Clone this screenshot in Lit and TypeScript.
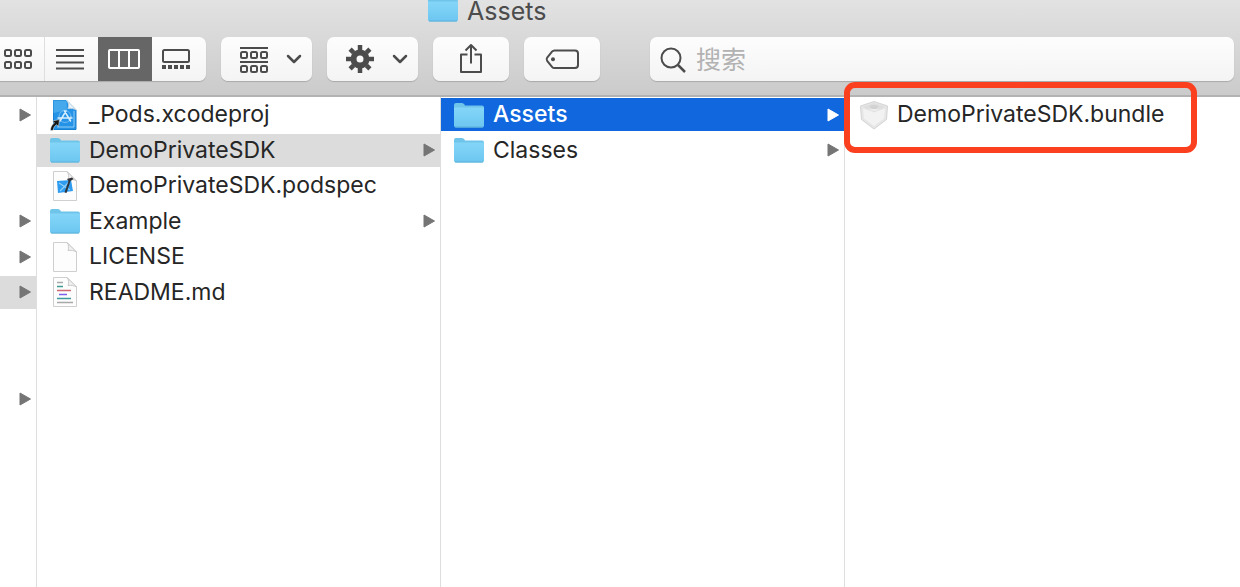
import { LitElement, html, svg, css, nothing } from "lit";
import { customElement, property, state } from "lit/decorators.js";
import { classMap } from "lit/directives/class-map.js";

type Kind = "folder" | "xcodeproj" | "podspec" | "blank" | "markdown" | "bundle";

interface Entry {
  name: string;
  kind: Kind;
  expandable?: boolean;
}

const SIDE: boolean[] = [true, false, false, true, true, true, false, false, true];

const PROJECT: Entry[] = [
  { name: "_Pods.xcodeproj", kind: "xcodeproj" },
  { name: "DemoPrivateSDK", kind: "folder", expandable: true },
  { name: "DemoPrivateSDK.podspec", kind: "podspec" },
  { name: "Example", kind: "folder", expandable: true },
  { name: "LICENSE", kind: "blank" },
  { name: "README.md", kind: "markdown" },
];

const SDK: Entry[] = [
  { name: "Assets", kind: "folder", expandable: true },
  { name: "Classes", kind: "folder", expandable: true },
];

const ASSETS: Entry[] = [{ name: "DemoPrivateSDK.bundle", kind: "bundle" }];

const page = svg`
  <path d="M4.500 1.500H18L27.500 11V30.500H4.500Z" fill="#fdfdfd" stroke="#cfcfcf"/>
  <path d="M18 1.500C20 4 20 7 19 9.500C22 9 25 9.500 27.500 11Z" fill="#f1f1f1" stroke="#c9c9c9"/>`;

const glyphs: Record<Kind, unknown> = {
  folder: svg`
    <defs>
      <linearGradient id="f" x1="0" y1="0" x2="0" y2="1">
        <stop offset="0" stop-color="#84d6f8"/><stop offset="1" stop-color="#6cc6f0"/>
      </linearGradient>
    </defs>
    <path d="M1 27V6Q1 4 3 4H9Q10.500 4 11.500 5.500L12 6.500H29Q31 6.500 31 8.500V27Z" fill="#6fc4ea"/>
    <path d="M1 8.500H31V26.500Q31 28.500 29 28.500H3Q1 28.500 1 26.500Z" fill="url(#f)"/>
    <path d="M2 28H30" stroke="#5fb1d8" fill="none"/>`,
  xcodeproj: svg`
    <path d="M4.500 1.500H17.500L27 11V30.500H4.500Z" fill="#2492e6" stroke="#1b7fd0"/>
    <path d="M4.500 1.500H17.500L18 11L4.500 14Z" fill="#45a9ec"/>
    <path d="M17.500 1C20 4 20 7 19 9.500C22 9 25 9.500 27.500 11Z" fill="#e9f2f8" stroke="#c3d6e3"/>
    <path d="M8 28H25V12" stroke="#8ecdf7" fill="none"/>
    <g stroke="#d9efff" stroke-width="1.500" fill="none" stroke-linecap="round">
      <path d="M17 12L11 22M15.500 12L21.500 22M9 19H23"/>
      <circle cx="16" cy="17.500" r="6" stroke-width=".6" opacity=".7"/>
    </g>
    <path d="M1.500 31.500C1.500 28 3 25.500 5.500 24L3.500 22L10.500 20.500L9.500 27.500L7.500 25.700C5.500 27 4.500 28.500 4 31.500Z" fill="#161616" stroke="#fff" stroke-width=".5"/>`,
  podspec: svg`${page}
    <path d="M8 11L22 10L24 21L9 23Z" fill="#2d9bf0"/>
    <path d="M10 13L21 20M20 12L11 21" stroke="#8fd0fb" stroke-width="1.300"/>
    <path d="M18 9L23 7.500L24.500 9L21.500 11L17.500 23L15.500 22.500L19.500 11Z" fill="#30343a"/>`,
  blank: page,
  markdown: svg`${page}
    <g stroke-width="1.500" fill="none">
      <path d="M8 6.500H14" stroke="#a8a8a8"/>
      <path d="M8 10.500H14" stroke="#3e9b92"/>
      <path d="M8 14.500H22" stroke="#cf6873"/>
      <path d="M10 18.500H18" stroke="#7b60e8"/>
      <path d="M8 22.500H22" stroke="#3f9aa0"/>
      <path d="M8 26.500H24" stroke="#a8a8a8"/>
    </g>`,
  bundle: svg`
    <path d="M17 2.500L30.500 7L29.500 20.500L17 30L4.500 20.500L3.500 7Z" fill="#e6e6e6" stroke="#d4d4d4" stroke-linejoin="round"/>
    <path d="M17 4L28.500 8L17 13L5.500 8Z" fill="#dedede"/>
    <path d="M6 9.500L17 13.500L28 9.500L27 19.500L17 27L7 19.500Z" fill="#f2f2f2"/>
    <path d="M12.500 8V10.500Q17 13.500 21.500 10.500V8Z" fill="#ececec"/>
    <ellipse cx="17" cy="8" rx="4.500" ry="2" fill="#d2d2d2"/>`,
};

const icon = (kind: Kind) =>
  html`<svg class="icon" viewBox="0 0 32 32" aria-hidden="true">${glyphs[kind]}</svg>`;

const arrow = html`<svg class="arrow" viewBox="0 0 12 14" aria-hidden="true">
  <path d="M1 1L11.500 7L1 13Z" fill="currentColor" stroke="currentColor" stroke-linejoin="round"/>
</svg>`;

const chevron = html`<svg class="chevron" viewBox="0 0 16 10" aria-hidden="true">
  <path d="M2 2L8 8L14 2" fill="none" stroke="currentColor" stroke-width="2.500" stroke-linecap="round" stroke-linejoin="round"/>
</svg>`;

const tiles = (rows: number[]) =>
  rows.map((y) => [1, 11, 21].map((x) => svg`<rect x=${x} y=${y} width="6" height="6" rx="1.500"/>`));

const tool = (content: unknown) => html`<svg
  class="tool" viewBox="0 0 32 32" fill="none" stroke="currentColor" stroke-width="2" aria-hidden="true"
>${content}</svg>`;

const views = [
  { label: "Icons", art: svg`<g transform="translate(2 0)">${tiles([7, 19])}</g>` },
  { label: "List", art: svg`<path d="M2 7H30M2 13H30M2 19.500H30M2 25.500H30"/>` },
  { label: "Columns", art: svg`<rect x="1" y="7" width="30" height="18" rx="1"/><path d="M11 7V25M21 7V25"/>` },
  {
    label: "Gallery",
    art: svg`<rect x="3" y="7" width="26" height="12" rx="1.500"/>
      <path d="M2 24H30" stroke-width="4" stroke-dasharray="4 2"/>`,
  },
];

const groupArt = svg`<g transform="translate(2 0)"><path d="M0 5H28M0 19H28"/>${tiles([9, 23])}</g>`;
const gearArt = svg`
  <circle cx="16" cy="16" r="6.500" stroke-width="6"/>
  <g stroke-width="4.500">
    ${[0, 45, 90, 135, 180, 225, 270, 315].map(
      (a) => svg`<path d="M16 7V2" transform="rotate(${a} 16 16)"/>`
    )}
  </g>`;
const shareArt = svg`<path d="M12.500 11.500H6V29H26V11.500H19.500M16 20.500V2M10.500 7.500L16 2L21.500 7.500" stroke-linejoin="round"/>`;
const tagArt = svg`
  <path d="M8.500 7.500H29Q32 7.500 32 10.500V22Q32 25 29 25H8.500Q7 25 6 23.800L1.200 18Q0 16.200 1.200 14.500L6 8.700Q7 7.500 8.500 7.500Z"/>
  <circle cx="7" cy="16.200" r="2" fill="currentColor" stroke="none"/>`;

@customElement("finder-row")
class FinderRow extends LitElement {
  @property({ attribute: false }) entry!: Entry;
  @property() tone = "";

  static styles = css`
    :host {
      display: block;
      padding-top: 1px;
    }
    .row {
      display: flex;
      align-items: center;
      width: 100%;
      height: 33px;
      padding: 0 5px 0 12px;
      border: 0;
      background: transparent;
      color: #262626;
      font: 400 23px/33px Inter, "Noto Sans CJK SC", sans-serif;
      text-align: left;
      white-space: nowrap;
    }
    .trail {
      background: #dcdcdc;
    }
    .selected {
      background: #1067de;
      color: #fff;
      font-weight: 500;
    }
    .icon {
      flex: none;
      width: 32px;
      height: 32px;
      margin-right: 8px;
    }
    .name {
      flex: 1;
    }
    .arrow {
      flex: none;
      width: 12px;
      height: 14px;
      color: #757575;
    }
    .selected .arrow {
      color: #fff;
    }
  `;

  render() {
    const { name, kind, expandable } = this.entry;
    return html`<button
      class=${classMap({ row: true, trail: this.tone === "trail", selected: this.tone === "selected" })}
    >
      ${icon(kind)}<span class="name">${name}</span>${expandable ? arrow : nothing}
    </button>`;
  }
}

@customElement("app-root")
class AppRoot extends LitElement {
  @state() private view = 2;

  static styles = css`
    :host {
      display: flex;
      flex-direction: column;
      height: 100vh;
      overflow: hidden;
      background: #fff;
      color: #4c4c4c;
      font-family: Inter, "Noto Sans CJK SC", sans-serif;
    }
    .header {
      flex: none;
      box-sizing: border-box;
      height: 97px;
      border-bottom: 2px solid #b3b3b3;
      background: linear-gradient(#e2e2e2, #cbcbcb);
    }
    .title {
      display: flex;
      align-items: center;
      gap: 8px;
      height: 22px;
      margin: 0 0 15px;
      padding-left: 427px;
      font-size: 25px;
      font-weight: 400;
      line-height: 22px;
    }
    .icon {
      width: 32px;
      height: 32px;
      margin-top: -4px;
    }
    .toolbar {
      display: flex;
      gap: 15px;
      height: 44px;
      padding-right: 6px;
    }
    .segments {
      display: flex;
      overflow: hidden;
      border-radius: 0 7px 7px 0;
      box-shadow: 0 1px 1px #a9a9a9;
    }
    .segment,
    .button {
      display: flex;
      align-items: center;
      justify-content: center;
      padding: 0;
      border: 0;
      background: linear-gradient(#fdfdfd, #f4f4f4);
      color: #4c4c4c;
    }
    .segment {
      width: 54px;
      padding-right: 3px;
      border-left: 1px solid #dedede;
    }
    .segment:first-child {
      width: 44px;
      padding-right: 9px;
      border-left: 0;
    }
    .segment.on {
      background: #666;
      border-color: #666;
      color: #fff;
    }
    .segment:last-child {
      padding-right: 6px;
      border-left: 0;
    }
    .button {
      width: 76px;
      border-radius: 7px;
      box-shadow: 0 1px 1px #a9a9a9;
    }
    .button.menu {
      gap: 16px;
      width: 91px;
      padding-left: 6px;
    }
    .tool {
      flex: none;
      width: 32px;
      height: 32px;
      overflow: visible;
    }
    .chevron {
      flex: none;
      width: 16px;
      height: 10px;
    }
    .search {
      display: flex;
      align-items: center;
      flex: 1;
      gap: 10px;
      margin-left: 35px;
      padding: 2px 10px 0;
      border-radius: 7px;
      background: linear-gradient(#fdfdfd, #f4f4f4);
      box-shadow: 0 1px 1px #a9a9a9;
    }
    .glass {
      flex: none;
      width: 26px;
      height: 26px;
    }
    .field {
      flex: 1;
      min-width: 0;
      padding: 0;
      border: 0;
      outline: 0;
      background: transparent;
      color: #4c4c4c;
      font: 400 25px/36px Inter, "Noto Sans CJK SC", sans-serif;
    }
    .field::placeholder {
      color: #b2b2b2;
      opacity: 1;
    }
    .columns {
      display: grid;
      flex: 1;
      grid-template-columns: 37px 404px 404px 1fr;
      min-height: 0;
    }
    .column {
      position: relative;
      min-width: 0;
      border-right: 1px solid #dedede;
    }
    .column:last-child {
      border-right: 0;
    }
    .list {
      display: grid;
      grid-template-rows: repeat(12, 1fr);
      height: 426px;
      margin: 0;
      padding: 0;
      list-style: none;
    }
    .slot {
      padding-top: 1px;
    }
    .stub {
      display: flex;
      align-items: center;
      justify-content: flex-end;
      width: 100%;
      height: 33px;
      padding: 0 5px;
      border: 0;
      background: transparent;
      color: #757575;
    }
    .stub.trail {
      background: #dcdcdc;
    }
    .arrow {
      width: 12px;
      height: 14px;
    }
    .callout {
      position: absolute;
      top: -15px;
      left: -1px;
      box-sizing: border-box;
      width: 353px;
      height: 71px;
      border: 6px solid #fb4020;
      border-radius: 11px;
      pointer-events: none;
    }
  `;

  private column(label: string, entries: Entry[], marked = -1, tone = "") {
    return html`<ul class="list" aria-label=${label}>
      ${entries.map(
        (entry, i) => html`<li><finder-row .entry=${entry} tone=${i === marked ? tone : ""}></finder-row></li>`
      )}
    </ul>`;
  }

  render() {
    return html`
      <header class="header">
        <h1 class="title">${icon("folder")}<span>Assets</span></h1>
        <div class="toolbar">
          <div class="segments" role="group" aria-label="View">
            ${views.map(
              (v, i) => html`<button
                class=${classMap({ segment: true, on: i === this.view })}
                aria-label=${v.label}
                aria-pressed=${i === this.view ? "true" : "false"}
                @click=${() => (this.view = i)}
              >${tool(v.art)}</button>`
            )}
          </div>
          <button class="button menu" aria-label="Group">${tool(groupArt)}${chevron}</button>
          <button class="button menu" aria-label="Actions">${tool(gearArt)}${chevron}</button>
          <button class="button" aria-label="Share">${tool(shareArt)}</button>
          <button class="button" aria-label="Tags">${tool(tagArt)}</button>
          <label class="search">
            <svg class="glass" viewBox="0 0 26 26" fill="none" stroke="currentColor" stroke-width="2" aria-hidden="true">
              <circle cx="11" cy="11" r="9.500"/><path d="M18 18L25 25" stroke-width="2.500"/>
            </svg>
            <input class="field" type="text" placeholder="搜索" aria-label="搜索" />
          </label>
        </div>
      </header>
      <main class="columns">
        <section class="column">
          <ul class="list">
            ${SIDE.map(
              (shown, i) => html`<li class="slot">
                ${shown
                  ? html`<button class=${classMap({ stub: true, trail: i === 5 })} aria-label="Open">${arrow}</button>`
                  : nothing}
              </li>`
            )}
          </ul>
        </section>
        <section class="column">${this.column("Project", PROJECT, 1, "trail")}</section>
        <section class="column">${this.column("DemoPrivateSDK", SDK, 0, "selected")}</section>
        <section class="column">
          ${this.column("Assets", ASSETS)}
          <div class="callout"></div>
        </section>
      </main>
    `;
  }
}
